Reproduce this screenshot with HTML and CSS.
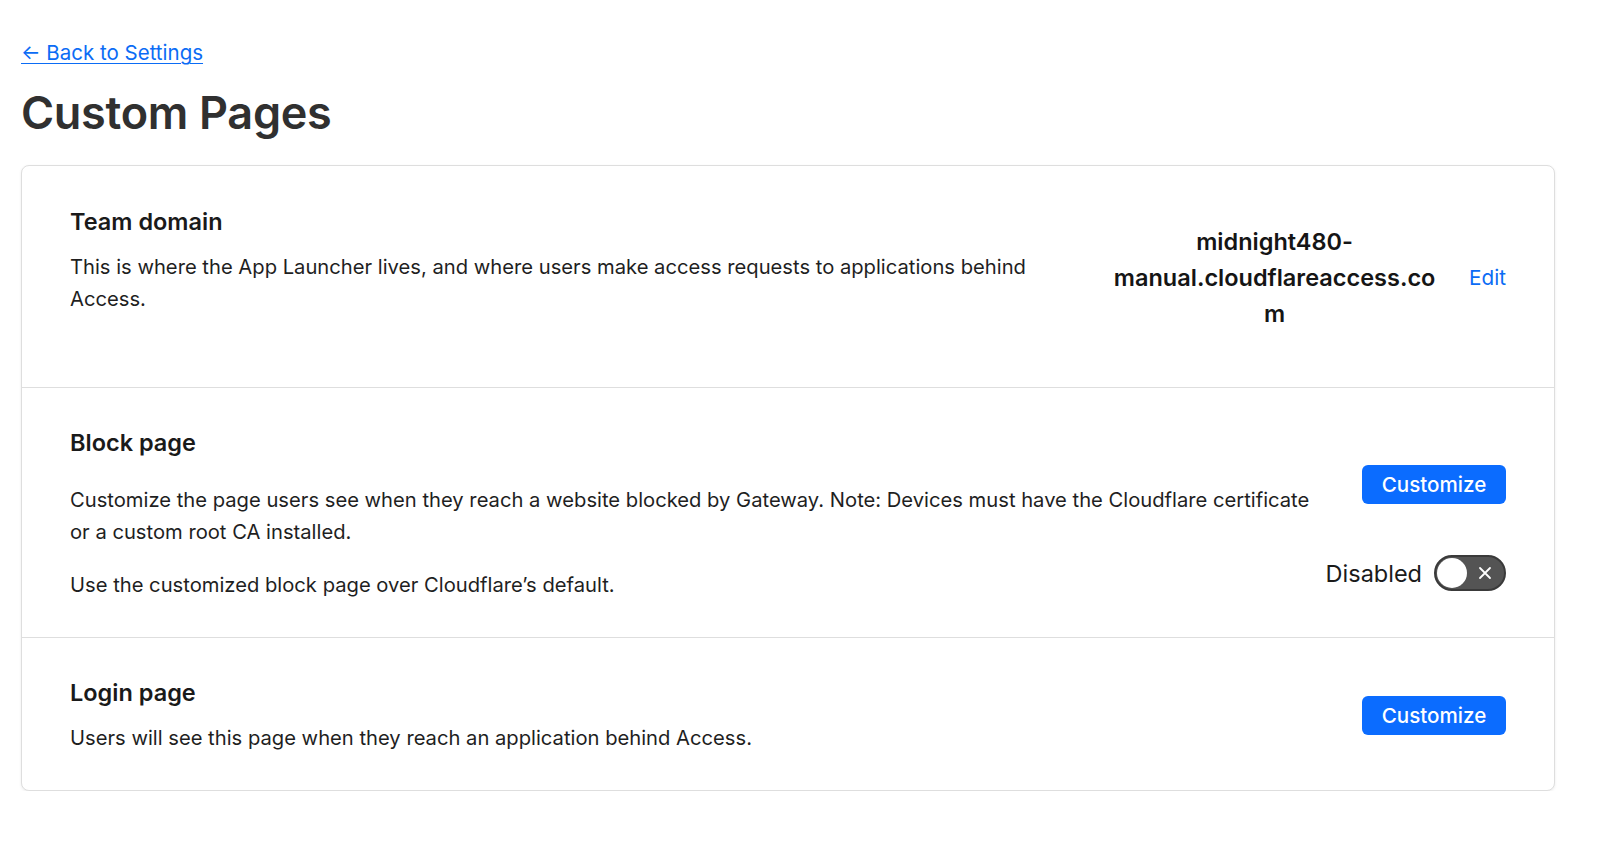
FILE: index.html
```html
<!DOCTYPE html>
<html lang="en">
<head>
<meta charset="utf-8">
<title>Custom Pages</title>
<link rel="stylesheet" href="styles.css">
</head>
<body>
<main class="page">
  <a class="back" href="#">← Back to Settings</a>
  <h1 class="title">Custom Pages</h1>
  <div class="card">
    <section class="section team">
      <div class="left">
        <h2 class="heading">Team domain</h2>
        <p class="desc team-desc">This is where the App Launcher lives, and where users make access requests to applications behind Access.</p>
      </div>
      <div class="right domain-row">
        <div class="domain">midnight480-manual.cloudflareaccess.com</div>
        <a class="edit" href="#">Edit</a>
      </div>
    </section>
    <section class="section block">
      <div class="left">
        <h2 class="heading">Block page</h2>
        <p class="desc block-desc">Customize the page users see when they reach a website blocked by Gateway. Note: Devices must have the Cloudflare certificate or a custom root CA installed.</p>
        <p class="desc block-note">Use the customized block page over Cloudflare’s default.</p>
      </div>
      <div class="right block-right">
        <button class="btn">Customize</button>
        <div class="toggle-row">
          <span class="toggle-label">Disabled</span>
          <span class="toggle">
            <span class="knob"></span>
            <svg class="x" viewBox="0 0 16 16" width="16" height="16"><path d="M3 3 L13 13 M13 3 L3 13" stroke="#fff" stroke-width="1.8" stroke-linecap="round"/></svg>
          </span>
        </div>
      </div>
    </section>
    <section class="section login">
      <div class="left">
        <h2 class="heading">Login page</h2>
        <p class="desc login-desc">Users will see this page when they reach an application behind Access.</p>
      </div>
      <div class="right">
        <button class="btn">Customize</button>
      </div>
    </section>
  </div>
</main>
</body>
</html>
```
FILE: styles.css
```css
* { box-sizing: border-box; }
html, body { margin: 0; padding: 0; background: #fff; }
body {
  font-family: Inter, "Noto Sans", "Liberation Sans", sans-serif;
  color: #1f1f1f;
}
.page {
  padding: 39px 45px 0 21px;
}
.back {
  display: inline-block;
  font-size: 20.5px;
  line-height: 28px;
  color: #0b6cf5;
  text-decoration: underline;
  text-underline-offset: 3px;
  text-decoration-thickness: 1px;
}
.title {
  margin: 19px 0 0 0;
  font-size: 45px;
  line-height: 54px;
  font-weight: 600;
  color: #303030;
  letter-spacing: -0.3px;
}
.card {
  margin-top: 25px;
  border: 1px solid #dedede;
  border-radius: 8px;
  box-shadow: 0 1px 3px rgba(0,0,0,0.08);
  background: #fff;
}
.section {
  display: flex;
  justify-content: space-between;
  padding: 39px 48px 36px 48px;
  border-top: 1px solid #dedede;
}
.section:first-child { border-top: none; }
.heading {
  margin: 0;
  font-size: 23.5px;
  line-height: 32px;
  font-weight: 600;
  color: #1a1a1a;
}
.desc {
  margin: 0;
  font-size: 20.2px;
  line-height: 31.6px;
  color: #1f1f1f;
}
.team { align-items: center; padding-bottom: 37px; }
.team .left { width: 980px; padding-top: 1px; padding-bottom: 36px; }
.team-desc { margin-top: 13px; }
.domain-row {
  display: flex;
  align-items: center;
}
.domain {
  width: 335px;
  text-align: center;
  font-size: 23.5px;
  line-height: 36px;
  font-weight: 600;
  color: #151515;
  overflow-wrap: anywhere;
}
.edit {
  margin-left: 27px;
  font-size: 20.7px;
  color: #0b6cf5;
  text-decoration: none;
}
.block .left { width: 1255px; }
.block-desc { margin-top: 25px; }
.block-note { margin-top: 22px; }
.block-right {
  display: flex;
  flex-direction: column;
  align-items: flex-end;
  padding-top: 38px;
}
.btn {
  font-family: inherit;
  font-size: 20.6px;
  font-weight: 500;
  color: #fff;
  background: #0b6cff;
  border: none;
  border-radius: 6px;
  width: 144px;
  height: 39px;
  padding: 0;
}
.toggle-row {
  display: flex;
  align-items: center;
  margin-top: 51px;
}
.toggle-label {
  font-size: 23.5px;
  color: #1a1a1a;
  margin-right: 12px;
}
.toggle {
  position: relative;
  display: inline-flex;
  align-items: center;
  justify-content: flex-end;
  width: 72px;
  height: 36px;
  border-radius: 18px;
  background: #545454;
  border: 2px solid #3a3a3a;
  padding-right: 11px;
}
.knob {
  position: absolute;
  left: 1px;
  top: 1px;
  width: 30px;
  height: 30px;
  border-radius: 50%;
  background: #fff;
}
.x { display: block; }
.login { align-items: center; padding-bottom: 36px; }
.login-desc { margin-top: 13px; }
```
